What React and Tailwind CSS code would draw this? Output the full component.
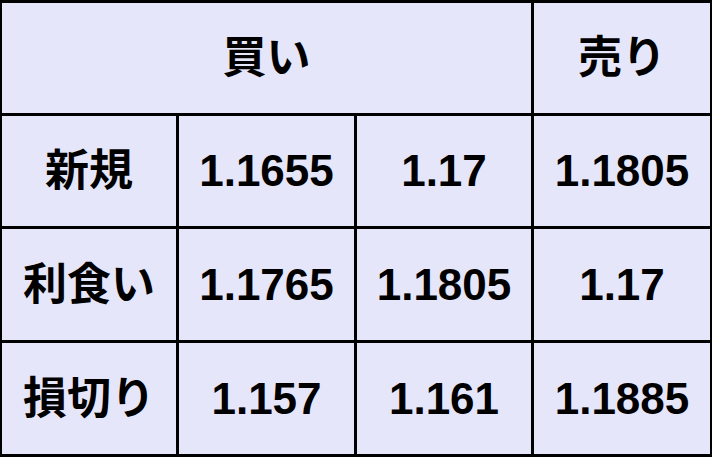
export default function App() {
  const rows = [
    ["新規", "1.1655", "1.17", "1.1805"],
    ["利食い", "1.1765", "1.1805", "1.17"],
    ["損切り", "1.157", "1.161", "1.1885"],
  ];

  const cell =
    "bg-[#e6e6fa] flex items-center justify-center text-black text-[44px] font-bold leading-none";

  return (
    <div className="w-[712px] h-[457px] bg-black pt-[3px] pb-[3px] px-[2px] font-['Liberation_Sans','Noto_Sans_CJK_JP',sans-serif]">
      <div className="grid grid-cols-[174px_175px_174px_176px] grid-rows-[110px_110px_111px_111px] gap-[3px]">
        {/* header */}
        <div className={cn3(cell)}>買い</div>
        <div className={cell}>売り</div>

        {rows.map((row, i) =>
          row.map((v, j) => (
            <div key={i + "-" + j} className={cell}>
              {v}
            </div>
          ))
        )}
      </div>
    </div>
  );
}

function cn3(base) {
  return base + " col-span-3";
}
